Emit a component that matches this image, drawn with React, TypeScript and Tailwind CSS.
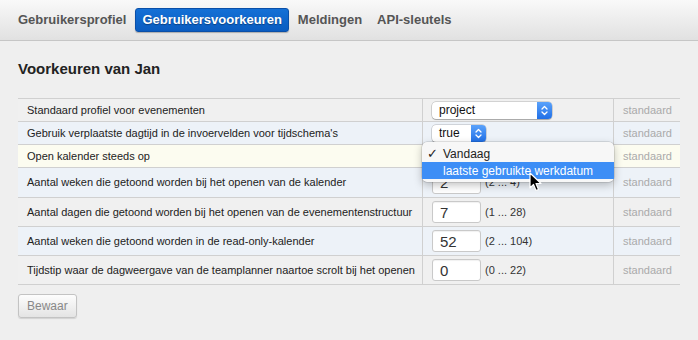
import React from "react";

function Stepper({ w }: { w: number }) {
  return (
    <div className="flex h-[17px] w-[15px] items-center justify-center rounded-r-[4px] bg-gradient-to-b from-[#5aa2fb] to-[#1f6fe6]" style={{ width: w }}>
      <svg width="7" height="11" viewBox="0 0 7 11" fill="none">
        <path d="M1 4 L3.5 1.5 L6 4" stroke="white" strokeWidth="1.3" strokeLinecap="round" strokeLinejoin="round" />
        <path d="M1 7 L3.5 9.5 L6 7" stroke="white" strokeWidth="1.3" strokeLinecap="round" strokeLinejoin="round" />
      </svg>
    </div>
  );
}

function Select({ value, width }: { value: string; width: number }) {
  return (
    <div
      className="flex h-[17px] items-center justify-between rounded-[4px] bg-white shadow-[0_0_0_0.5px_rgba(0,0,0,0.25),0_1px_1px_rgba(0,0,0,0.2)]"
      style={{ width }}
    >
      <span className="pl-[7px] text-[12px] leading-none text-[#111]">{value}</span>
      <Stepper w={15} />
    </div>
  );
}

function NumInput({ value, range }: { value: string; range: string }) {
  return (
    <div className="flex items-center">
      <div className="flex h-[22px] w-[49px] items-center rounded-[3px] border border-[#c9c9c9] bg-white pl-[7px] text-[15px] leading-none text-[#333] shadow-[inset_0_1px_1px_rgba(0,0,0,0.06)]">
        {value}
      </div>
      <span className="ml-[4px] text-[11px] text-[#333]">{range}</span>
    </div>
  );
}

type Row = { label: string; h: number; bg: string; value: React.ReactNode };

export default function App() {
  const rows: Row[] = [
    { label: "Standaard profiel voor evenementen", h: 22, bg: "bg-[#f0f0f0]", value: <Select value="project" width={120} /> },
    { label: "Gebruik verplaatste dagtijd in de invoervelden voor tijdschema's", h: 22, bg: "bg-[#edf2f8]", value: <Select value="true" width={54} /> },
    { label: "Open kalender steeds op", h: 22, bg: "bg-[#fcfcf0]", value: null },
    { label: "Aantal weken die getoond worden bij het openen van de kalender", h: 29, bg: "bg-[#edf2f8]", value: <NumInput value="2" range="(2 ... 4)" /> },
    { label: "Aantal dagen die getoond worden bij het openen van de evenementenstructuur", h: 28, bg: "bg-[#f0f0f0]", value: <NumInput value="7" range="(1 ... 28)" /> },
    { label: "Aantal weken die getoond worden in de read-only-kalender", h: 28, bg: "bg-[#edf2f8]", value: <NumInput value="52" range="(2 ... 104)" /> },
    { label: "Tijdstip waar de dagweergave van de teamplanner naartoe scrolt bij het openen", h: 28, bg: "bg-[#f0f0f0]", value: <NumInput value="0" range="(0 ... 22)" /> },
  ];

  return (
    <div className="relative h-[340px] w-[698px] overflow-hidden bg-[#efefef] font-['Liberation_Sans',Arial,sans-serif]">
      {/* Header */}
      <div className="flex h-[41px] items-center gap-[2px] border-b border-[#c6c6c6] bg-gradient-to-b from-[#f9f9f9] to-[#e1e1e1] pl-[11px]">
        <div className="px-[7px] text-[13px] font-bold text-[#555]">Gebruikersprofiel</div>
        <div className="flex h-[24px] items-center rounded-[3px] border border-[#0a4fa8] bg-gradient-to-b from-[#1470d6] to-[#0a5cc0] px-[6px] text-[13px] font-bold text-white shadow-[0_1px_1px_rgba(0,0,0,0.25)] [text-shadow:0_1px_1px_rgba(0,0,0,0.35)]">
          Gebruikersvoorkeuren
        </div>
        <div className="pl-[7px] pr-[6px] text-[13px] font-bold text-[#555]">Meldingen</div>
        <div className="px-[7px] text-[13px] font-bold text-[#555]">API-sleutels</div>
      </div>

      {/* Body */}
      <div className="px-[18px]">
        <h1 className="mt-[19px] text-[15px] font-bold leading-[18px] text-[#222]">Voorkeuren van Jan</h1>

        <div className="relative mt-[20px] w-[662px] border-b border-[#d0d0d0]">
          {rows.map((r, i) => (
            <div
              key={i}
              className={`grid grid-cols-[405px_191px_66px] border-t border-[#d0d0d0] ${r.bg}`}
              style={{ height: r.h + 1 }}
            >
              <div className="flex items-center border-r border-[#d0d0d0] pl-[9px] text-[11px] text-[#222]">{r.label}</div>
              <div className="flex items-center border-r border-[#d0d0d0] pl-[9px]">{r.value}</div>
              <div className="flex items-center pl-[9px] text-[11px] text-[#aaa]">standaard</div>
            </div>
          ))}

          {/* Open dropdown menu */}
          <div className="absolute left-[404px] top-[44px] w-[192px] rounded-[5px] bg-[#f7f7f7] py-[3px] shadow-[0_0_0_0.5px_rgba(0,0,0,0.18),0_3px_8px_rgba(0,0,0,0.25)]">
            <div className="flex h-[17px] items-center text-[12px] text-[#222]">
              <span className="w-[21px] pl-[5px] font-['DejaVu_Sans',sans-serif] text-[13px] font-bold">✓</span>
              <span>Vandaag</span>
            </div>
            <div className="flex h-[17px] items-center bg-[#3d8ef6] text-[12px] text-white">
              <span className="w-[21px]" />
              <span>laatste gebruikte werkdatum</span>
            </div>
          </div>

          {/* Mouse cursor */}
          <svg className="absolute left-[511px] top-[74px]" width="13" height="20" viewBox="0 0 13 20">
            <path d="M1 1 L1 16 L4.5 12.5 L7 18.5 L9.5 17.5 L7 11.5 L12 11.5 Z" fill="black" stroke="white" strokeWidth="1.2" strokeLinejoin="round" />
          </svg>
        </div>

        <button className="mt-[9px] h-[24px] rounded-[3px] border border-[#c3c3c3] bg-gradient-to-b from-[#fdfdfd] to-[#e4e4e4] px-[8px] text-[12px] text-[#888] shadow-[0_1px_1px_rgba(0,0,0,0.12)]">
          Bewaar
        </button>
      </div>
    </div>
  );
}
